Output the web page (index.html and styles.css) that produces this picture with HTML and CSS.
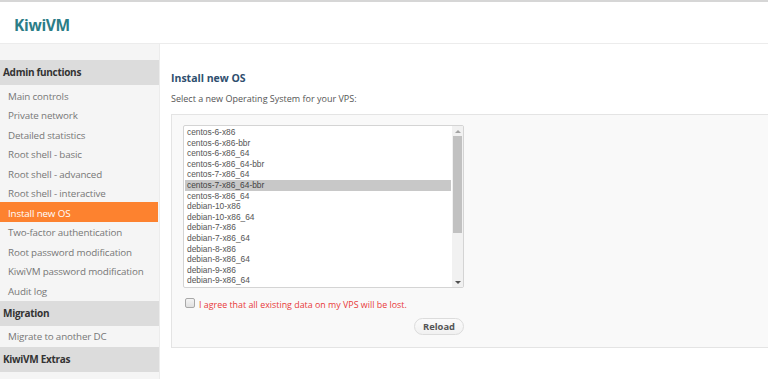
FILE: index.html
```html
<!DOCTYPE html>
<html lang="en">
<head>
    <meta charset="UTF-8">
    <title>KiwiVM - Install new OS</title>
    <link rel="stylesheet" href="styles.css">
</head>
<body>
    <div class="header">
        <div class="logo">KiwiVM</div>
    </div>

    <div class="page">
        <div class="sidebar">
            <div class="menu-title">Admin functions</div>
            <div class="menu-item">Main controls</div>
            <div class="menu-item">Private network</div>
            <div class="menu-item">Detailed statistics</div>
            <div class="menu-item">Root shell - basic</div>
            <div class="menu-item">Root shell - advanced</div>
            <div class="menu-item">Root shell - interactive</div>
            <div class="menu-item active">Install new OS</div>
            <div class="menu-item">Two-factor authentication</div>
            <div class="menu-item">Root password modification</div>
            <div class="menu-item">KiwiVM password modification</div>
            <div class="menu-item">Audit log</div>
            <div class="menu-title">Migration</div>
            <div class="menu-item">Migrate to another DC</div>
            <div class="menu-title">KiwiVM Extras</div>
            <div class="menu-item">API</div>
        </div>

        <div class="content">
            <h1 class="title">Install new OS</h1>
            <p class="intro">Select a new Operating System for your VPS:</p>

            <div class="panel">
                <div class="os-list">
                    <div class="os-options">
                        <div class="os">centos-6-x86</div>
                        <div class="os">centos-6-x86-bbr</div>
                        <div class="os">centos-6-x86_64</div>
                        <div class="os">centos-6-x86_64-bbr</div>
                        <div class="os">centos-7-x86_64</div>
                        <div class="os selected">centos-7-x86_64-bbr</div>
                        <div class="os">centos-8-x86_64</div>
                        <div class="os">debian-10-x86</div>
                        <div class="os">debian-10-x86_64</div>
                        <div class="os">debian-7-x86</div>
                        <div class="os">debian-7-x86_64</div>
                        <div class="os">debian-8-x86</div>
                        <div class="os">debian-8-x86_64</div>
                        <div class="os">debian-9-x86</div>
                        <div class="os">debian-9-x86_64</div>
                        <div class="os">ubuntu-16.04-x86_64</div>
                    </div>
                    <div class="scrollbar">
                        <div class="arrow up"></div>
                        <div class="track"><div class="thumb"></div></div>
                        <div class="arrow down"></div>
                    </div>
                </div>

                <label class="agree">
                    <span class="checkbox"></span>
                    I agree that all existing data on my VPS will be lost.
                </label>

                <div class="actions">
                    <button class="btn">Reload</button>
                </div>
            </div>
        </div>
    </div>
</body>
</html>
```

FILE: styles.css
```css
* {
    margin: 0;
    padding: 0;
    box-sizing: border-box;
}

body {
    background: #fff;
    font-family: 'Open Sans', sans-serif;
    border-top: 2px solid #d6d6d6;
    overflow: hidden;
    height: 379px;
}

.header {
    height: 42px;
    border-bottom: 1px solid #ececec;
    padding: 13px 0 0 14px;
}

.logo {
    font-size: 15.5px;
    font-weight: 700;
    color: #2b7d87;
    line-height: 20px;
    letter-spacing: -0.3px;
}

.page {
    display: flex;
}

.sidebar {
    width: 160px;
    flex-shrink: 0;
    background: #f5f5f5;
    border-right: 1px solid #ececec;
    padding-top: 16px;
    height: 340px;
}

.menu-title {
    background: #dcdcdc;
    color: #333;
    font-size: 10px;
    font-weight: 700;
    letter-spacing: -0.3px;
    height: 25px;
    line-height: 25px;
    padding-left: 3px;
}

.menu-item + .menu-title {
    margin-top: 1px;
}

.menu-item {
    color: #777;
    font-size: 9.8px;
    letter-spacing: -0.15px;
    height: 19.5px;
    line-height: 17px;
    padding: 2.5px 0 0 8px;
    margin-right: 1px;
}

.menu-title + .menu-item + .menu-title {
    margin-top: 2px;
}

.menu-item.active {
    background: #fd822f;
    color: #fff;
}

.content {
    flex: 1;
    padding: 27px 0 0 11px;
}

.title {
    font-size: 10.5px;
    font-weight: 700;
    color: #2e4e6e;
    line-height: 14px;
}

.intro {
    font-size: 9px;
    color: #555;
    margin-top: 7px;
    line-height: 14px;
}

.panel {
    margin-top: 8px;
    background: #f9f9f9;
    border: 1px solid #e4e4e4;
    border-right: none;
    height: 234px;
    padding: 10px 0 0 11px;
}

.os-list {
    width: 281px;
    height: 163px;
    background: #fff;
    border: 1px solid #d4d4d4;
    border-radius: 2px;
    display: flex;
    overflow: hidden;
}

.os-options {
    flex: 1;
    padding: 1px 1px 0 1px;
}

.os {
    font-family: 'Liberation Sans', Arial, sans-serif;
    font-size: 8.4px;
    color: #555;
    height: 10.6px;
    line-height: 10.6px;
    padding-left: 2px;
}

.os.selected {
    background: #c8c8c8;
    color: #444;
}

.scrollbar {
    width: 11px;
    display: flex;
    flex-direction: column;
    background: #f1f1f1;
}

.arrow {
    height: 10px;
    display: flex;
    justify-content: center;
    align-items: center;
}

.arrow::before {
    content: "";
    border-left: 3px solid transparent;
    border-right: 3px solid transparent;
}

.arrow.up::before {
    border-bottom: 3px solid #a3a3a3;
}

.arrow.down::before {
    border-top: 3px solid #505050;
}

.track {
    flex: 1;
    padding: 0 1px;
}

.thumb {
    height: 97px;
    background: #c1c1c1;
}

.agree {
    display: flex;
    align-items: center;
    margin-top: 7px;
    padding-left: 2px;
    font-size: 8.9px;
    color: #e8393a;
    height: 18px;
}

.checkbox {
    width: 10px;
    height: 10px;
    border: 1px solid #a8a8a8;
    border-radius: 2px;
    background: linear-gradient(#f4f4f4, #e0e0e0);
    margin-right: 4px;
    margin-top: -3px;
}

.actions {
    width: 281px;
    display: flex;
    justify-content: flex-end;
    margin-top: 5px;
}

.btn {
    font-family: 'Open Sans', sans-serif;
    font-size: 9.4px;
    font-weight: 700;
    color: #555;
    width: 50px;
    height: 17px;
    border: 1px solid #dcdcdc;
    border-radius: 9px;
    background: linear-gradient(#fbfbfb, #f1f1f1);
}
```
